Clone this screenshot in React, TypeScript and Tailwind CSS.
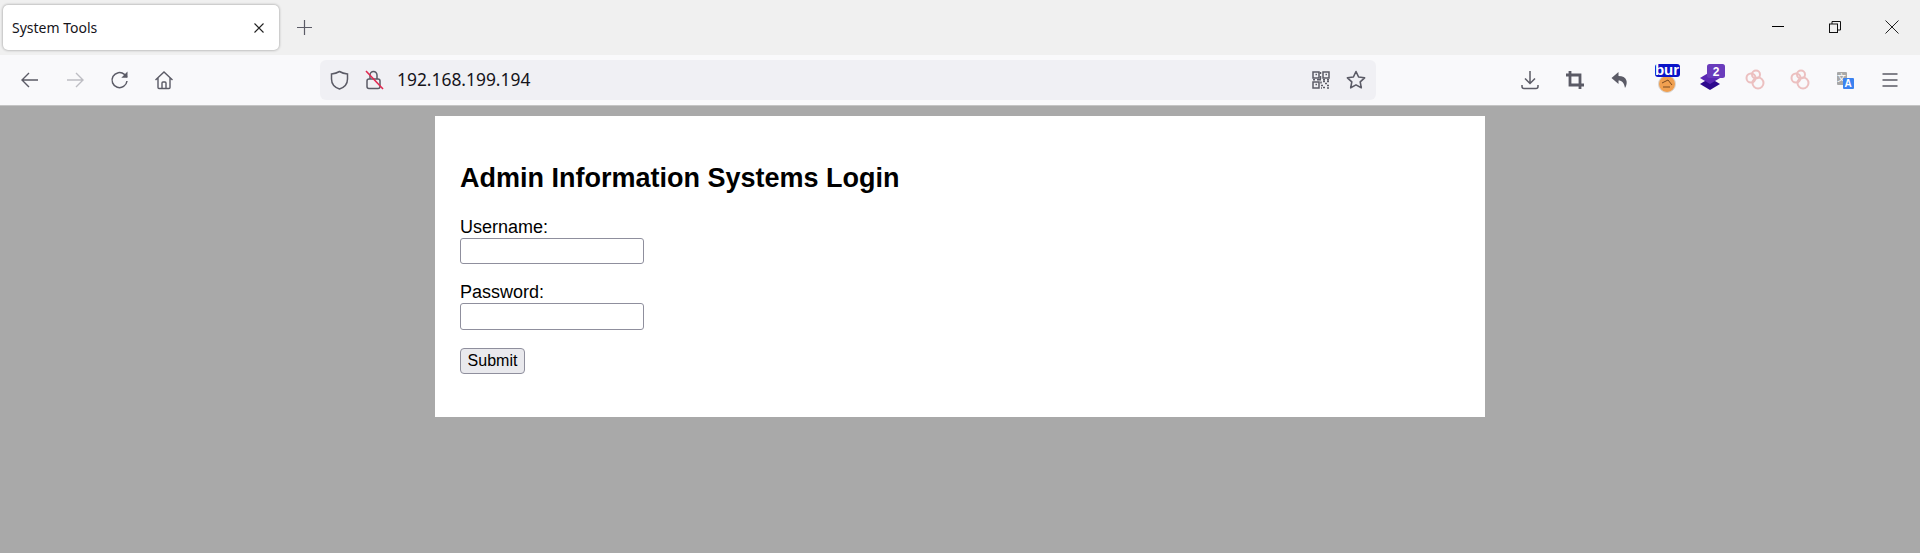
const iconStroke = '#5b5b66';

function Favicon({ children }: { children: React.ReactNode }) {
  return <div className="w-[45px] h-[40px] flex items-center justify-center relative">{children}</div>;
}

function Rings() {
  return (
    <svg width="24" height="24" viewBox="0 0 24 24" fill="none" stroke="#ecc0c0" strokeWidth="2">
      <circle cx="8" cy="10" r="4.500" />
      <circle cx="13" cy="6.500" r="4" />
      <circle cx="15" cy="15" r="5.500" />
    </svg>
  );
}

function Toolbar() {
  return (
    <div className="h-[50px] bg-[#f9f9fb] border-b border-[#c4c4c4] box-content flex items-center text-[#5b5b66]">
      <div className="w-[320px] flex items-center pl-[12px] shrink-0">
        <button className="w-[36px] h-[36px] flex items-center justify-center mr-[9px]">
          <svg width="20" height="20" viewBox="0 0 20 20" fill="none" stroke={iconStroke} strokeWidth="1.4">
            <path d="M18 10H2M9 3l-7 7 7 7" />
          </svg>
        </button>
        <button className="w-[36px] h-[36px] flex items-center justify-center mr-[9px]">
          <svg width="20" height="20" viewBox="0 0 20 20" fill="none" stroke="#bdbdc3" strokeWidth="1.4">
            <path d="M2 10h16M11 3l7 7-7 7" />
          </svg>
        </button>
        <button className="w-[36px] h-[36px] flex items-center justify-center mr-[8px]">
          <svg width="20" height="20" viewBox="0 0 20 20" fill="none" stroke={iconStroke} strokeWidth="1.5">
            <path d="M17 11a7.500 7.500 0 1 1-2.600-6.600L17 7" />
            <path d="M17.500 1.500v6.200h-6.200z" fill={iconStroke} stroke="none" />
          </svg>
        </button>
        <button className="w-[36px] h-[36px] flex items-center justify-center">
          <svg width="20" height="20" viewBox="0 0 20 20" fill="none" stroke={iconStroke} strokeWidth="1.4">
            <path d="M1.500 10L10 2l8.500 8M4 8v9.500a1 1 0 0 0 1 1h10a1 1 0 0 0 1-1V8" />
            <path d="M8 18.500v-5.500a1 1 0 0 1 1-1h2a1 1 0 0 1 1 1v5.500" />
          </svg>
        </button>
      </div>

      <div className="w-[1056px] h-[40px] bg-[#f0f0f4] rounded-[6px] flex items-center shrink-0">
        <svg className="ml-[10px]" width="19" height="20" viewBox="0 0 19 20" fill="none" stroke={iconStroke} strokeWidth="1.5">
          <path d="M9.500 1.500c2.500 1.500 5 2.200 8 2.500v5c0 5-3.500 8.500-8 10-4.500-1.500-8-5-8-10V4c3-.3 5.500-1 8-2.500z" />
        </svg>
        <svg className="ml-[16px]" width="19" height="22" viewBox="0 0 19 22" fill="none">
          <rect x="2" y="10" width="13" height="9.500" rx="2" stroke={iconStroke} strokeWidth="1.5" />
          <path d="M5 10V6a3.500 3.500 0 0 1 7 0v4" stroke={iconStroke} strokeWidth="1.5" />
          <path d="M1 2l17 18" stroke="#e22850" strokeWidth="1.6" />
        </svg>
        <span className="ml-[13px] text-[17.4px] text-[#15141a] font-['Noto_Sans','Open_Sans',sans-serif] leading-none">192.168.199.194</span>
        <div className="ml-auto flex items-center">
          <svg width="18" height="18" viewBox="0 0 18 18" fill="none" stroke={iconStroke} strokeWidth="1.500">
            <rect x="1" y="1" width="6" height="6" />
            <rect x="11" y="1" width="6" height="6" />
            <rect x="1" y="11" width="6" height="6" />
            <path d="M3.500 3.500h1.500M13.500 3.500h1.500M3.500 13.500h1.500" />
            <path d="M8.500 1v2M8.500 5v3M1 8.800h2M5 8.800h4M11 8.800h2M15 8.800h2M9 10.500v2M11 10.500h2M15 10.500h2M9 14.500h2M13 12.500h2M11 16.500h2M15 14.500h2M9 17h1M15 17h2" />
          </svg>
          <svg className="ml-[16px] mr-[10px]" width="20" height="20" viewBox="0 0 20 20" fill="none" stroke={iconStroke} strokeWidth="1.600" strokeLinejoin="round">
            <path d="M10 1.500l2.600 5.500 6 .8-4.400 4.100 1.100 5.900-5.300-2.900-5.300 2.900 1.100-5.900-4.400-4.100 6-.8z" />
          </svg>
        </div>
      </div>

      <div className="flex-1 flex items-center pl-[131px]">
        <Favicon>
          <svg width="20" height="20" viewBox="0 0 20 20" fill="none" stroke={iconStroke} strokeWidth="1.5">
            <path d="M10 1v12M5 8.500l5 5 5-5M2 15v1.500a2 2 0 0 0 2 2h12a2 2 0 0 0 2-2V15" />
          </svg>
        </Favicon>
        <Favicon>
          <svg width="20" height="20" viewBox="0 0 20 20" fill="none" stroke={iconStroke} strokeWidth="2.800">
            <path d="M5 1v14h14M1 5h14v14" />
          </svg>
        </Favicon>
        <Favicon>
          <svg width="20" height="20" viewBox="0 0 20 20" fill={iconStroke}>
            <path d="M8.500 2L1.500 8l7 6v-3.500c3.500 0 5.500 2 6.500 7.500 3.500-5.500 2-12-6.500-12z" />
          </svg>
        </Favicon>
        <Favicon>
          <div className="relative w-[24px] h-[24px]">
            <div className="absolute left-[5px] top-[7px] w-[18px] h-[18px] rounded-full bg-[#f0a050] border border-[#d8d8d8]" />
            <svg className="absolute left-[7px] top-[10px]" width="14" height="12" viewBox="0 0 14 12" fill="none" stroke="#7a4a20" strokeWidth="1">
              <path d="M2 5l6-3 4 5M3 9h7" />
            </svg>
            <div className="absolute left-[2px] top-[-4px] w-[25px] h-[13px] bg-[#0a14c8] rounded-[3px] text-white text-[15px] font-bold leading-[12px] text-center font-['Liberation_Sans',sans-serif]">bur</div>
          </div>
        </Favicon>
        <Favicon>
          <svg width="30" height="32" viewBox="0 0 30 32" className="relative">
            <path d="M15 14l10 6-10 6-10-6z" fill="#2e0a8e" />
            <path d="M15 8l10 6-10 6-10-6z" fill="#5a28b4" />
            <rect x="12" y="0" width="18" height="14" rx="2.500" fill="#6a3cbc" />
            <text x="21" y="11.500" fontSize="12" fontWeight="700" fill="#fff" textAnchor="middle" fontFamily="Liberation Sans, sans-serif">2</text>
          </svg>
        </Favicon>
        <Favicon><Rings /></Favicon>
        <Favicon><Rings /></Favicon>
        <Favicon>
          <div className="relative w-[22px] h-[22px]">
            <div className="absolute left-[3px] top-[3px] w-[10px] h-[13px] bg-[#a8a8a8] rounded-[1px] text-[9px] leading-[12px] text-center text-white font-['Noto_Sans_CJK_SC',sans-serif]">文</div>
            <div className="absolute left-[9px] top-[9px] w-[11px] h-[11px] bg-[#3b82f0] rounded-[1px] text-[10px] leading-[11px] text-center text-white font-bold font-['Liberation_Sans',sans-serif]">A</div>
          </div>
        </Favicon>
        <Favicon>
          <svg width="16" height="16" viewBox="0 0 16 16" stroke={iconStroke} strokeWidth="1.5">
            <path d="M.5 2h15M.5 8h15M.5 14h15" />
          </svg>
        </Favicon>
      </div>
    </div>
  );
}

export default function App() {
  return (
    <div className="h-[553px] overflow-hidden bg-[#a9a9a9] flex flex-col font-['Liberation_Sans',sans-serif] text-black">
      <div className="h-[55px] bg-[#f0f0f0] flex items-start shrink-0">
        <div className="mt-[5px] ml-[3px] w-[276px] h-[45px] bg-white rounded-[5px] shadow-[0_0_3px_rgba(0,0,0,0.4)] flex items-center px-[9px] justify-between">
          <span className="text-[14px] text-[#15141a] font-['Noto_Sans',sans-serif]">System Tools</span>
          <svg className="mr-[6px]" width="10" height="10" viewBox="0 0 10 10" stroke="#222" strokeWidth="1.100">
            <path d="M.5.500l9 9M9.500.500l-9 9" />
          </svg>
        </div>
        <div className="mt-[5px] ml-[18px] h-[45px] flex items-center">
          <svg width="15" height="15" viewBox="0 0 15 15" stroke="#5b5b66" strokeWidth="1.200">
            <path d="M7.500 0v15M0 7.500h15" />
          </svg>
        </div>
        <div className="ml-auto h-[53px] flex items-center">
          <div className="w-[12px] h-px bg-black mr-[45px]" />
          <svg className="mr-[44px]" width="12" height="12" viewBox="0 0 12 12" fill="none" stroke="#111" strokeWidth="1">
            <rect x=".5" y="3" width="8" height="8.500" />
            <path d="M3 3V.5h8.500V9H8.500" />
          </svg>
          <svg className="mr-[21px]" width="14" height="14" viewBox="0 0 14 14" stroke="#222" strokeWidth="1">
            <path d="M.5.500l13 13M13.500.500l-13 13" />
          </svg>
        </div>
      </div>

      <Toolbar />

      <div className="flex justify-center pt-[10px]">
        <div className="w-[1050px] h-[301px] bg-white px-[25px]">
          <h1 className="text-[27px] font-bold mt-[47px] mb-[23px] leading-[31px]">Admin Information Systems Login</h1>
          <form>
            <label className="block text-[18px] leading-[21px]">Username:</label>
            <input type="text" className="block w-[184px] h-[26px] border border-[#8f8f9d] rounded-[3px] bg-white" />
            <label className="block mt-[18px] text-[18px] leading-[21px]">Password:</label>
            <input type="password" className="block w-[184px] h-[27px] border border-[#8f8f9d] rounded-[3px] bg-white" />
            <button type="button" className="block mt-[18px] w-[65px] h-[26px] bg-[#e9e9ed] border border-[#8f8f9d] rounded-[4px] text-[16px] leading-none text-center">Submit</button>
          </form>
        </div>
      </div>
    </div>
  );
}
